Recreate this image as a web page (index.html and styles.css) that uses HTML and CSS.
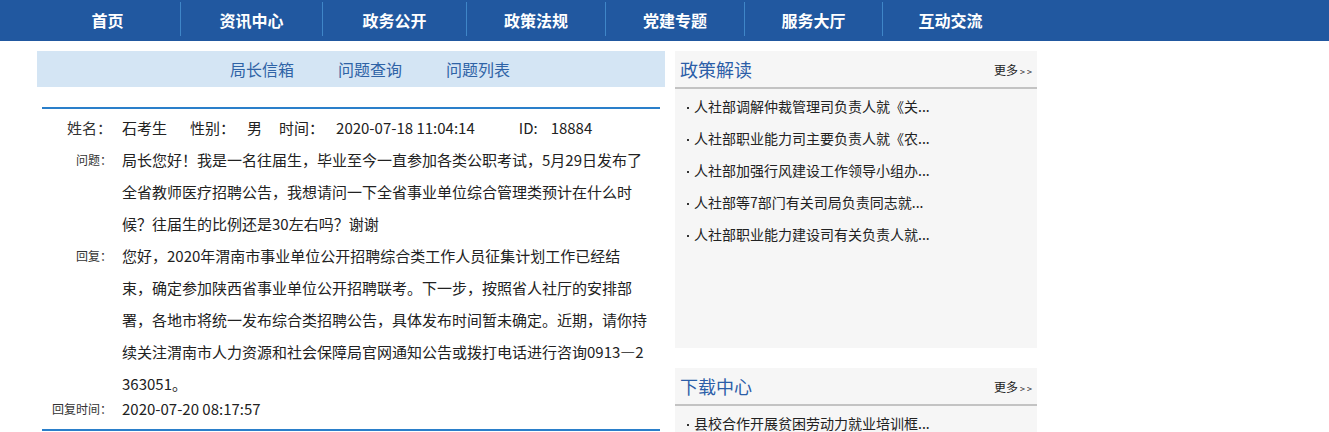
FILE: index.html
```
<!DOCTYPE html>
<html lang="zh-CN">
  <head>
    <meta charset="UTF-8" />
    <title>局长信箱</title>
    <link rel="stylesheet" href="styles.css">
  </head>
  <body>
    <div class="nav">
      <ul>
        <li>首页</li>
        <li>资讯中心</li>
        <li>政务公开</li>
        <li>政策法规</li>
        <li>党建专题</li>
        <li>服务大厅</li>
        <li>互动交流</li>
      </ul>
    </div>

    <div class="main">
      <div class="left">
        <div class="sub-nav">
          <a>局长信箱</a>
          <a>问题查询</a>
          <a>问题列表</a>
        </div>

        <div class="letter">
          <div class="row info">
            <div class="label big">姓名：</div>
            <div class="info-line">
              <span class="v-name">石考生</span>
              <span class="k">性别：</span>
              <span class="v-sex">男</span>
              <span class="k">时间：</span>
              <span class="v-time">2020-07-18 11:04:14</span>
              <span class="k-id">ID:</span>
              <span>18884</span>
            </div>
          </div>
          <div class="row">
            <div class="label">问题：</div>
            <div class="text">局长您好！我是一名往届生，毕业至今一直参加各类公职考试，5月29日发布了全省教师医疗招聘公告，我想请问一下全省事业单位综合管理类预计在什么时候？往届生的比例还是30左右吗？谢谢</div>
          </div>
          <div class="row">
            <div class="label">回复：</div>
            <div class="text">您好，2020年渭南市事业单位公开招聘综合类工作人员征集计划工作已经结束，确定参加陕西省事业单位公开招聘联考。下一步，按照省人社厅的安排部署，各地市将统一发布综合类招聘公告，具体发布时间暂未确定。近期，请你持续关注渭南市人力资源和社会保障局官网通知公告或拨打电话进行咨询0913—2363051。</div>
          </div>
          <div class="row reply-time">
            <div class="label">回复时间：</div>
            <div class="text">2020-07-20 08:17:57</div>
          </div>
        </div>
      </div>

      <div class="right">
        <div class="box box-tall">
          <div class="box-head">
            <span class="box-title">政策解读</span>
            <span class="more">更多<span class="arr">&gt; &gt;</span></span>
          </div>
          <ul class="list">
            <li>人社部调解仲裁管理司负责人就《关...</li>
            <li>人社部职业能力司主要负责人就《农...</li>
            <li>人社部加强行风建设工作领导小组办...</li>
            <li>人社部等7部门有关司局负责同志就...</li>
            <li>人社部职业能力建设司有关负责人就...</li>
          </ul>
        </div>
        <div class="box">
          <div class="box-head">
            <span class="box-title">下载中心</span>
            <span class="more">更多<span class="arr">&gt; &gt;</span></span>
          </div>
          <ul class="list">
            <li>县校合作开展贫困劳动力就业培训框...</li>
          </ul>
        </div>
      </div>
    </div>
  </body>
</html>
```

FILE: styles.css
```
body {
  margin: 0;
  font-family: "Noto Sans CJK SC", "Liberation Sans", sans-serif;
  color: #222;
  background: #fff;
}

ul {
  margin: 0;
  padding: 0;
  list-style: none;
}

.nav {
  height: 41px;
  background-color: #2158a0;
}
.nav ul {
  display: grid;
  grid-template-columns: 145px 142px 144px 139px 139px 138px 136px;
  margin-left: 35px;
  padding-top: 2px;
}
.nav li {
  height: 34px;
  line-height: 36px;
  text-align: center;
  color: #fff;
  font-size: 16px;
  font-weight: bold;
}
.nav li + li {
  border-left: 1px solid #3f86c8;
}

.main {
  display: flex;
  gap: 10px;
  width: 1000px;
  margin: 10px 0 0 37px;
}
.left {
  width: 628px;
}
.right {
  width: 362px;
}

.sub-nav {
  display: flex;
  gap: 44px;
  height: 36px;
  line-height: 36px;
  padding-left: 193px;
  background-color: #d4e5f4;
  font-size: 16px;
}
.sub-nav a {
  color: #2f63a6;
}

.letter {
  margin: 20px 5px 0;
  padding: 3px 0 11px;
  border-top: 2px solid #2a7fca;
  border-bottom: 2px solid #2a7fca;
  font-size: 15px;
}
.row {
  display: grid;
  grid-template-columns: 70px 526px;
  column-gap: 10px;
  line-height: 32px;
}
.text {
  word-break: break-all;
}
.label {
  text-align: right;
  font-size: 12px;
  color: #333;
}
.label.big {
  font-size: 15px;
}
.info-line {
  display: flex;
}
.info-line .k {
  margin-right: 12px;
}
.v-name {
  margin-right: 23px;
}
.v-sex {
  margin-right: 17px;
}
.v-time {
  margin-right: 44px;
}
.k-id {
  margin-right: 13px;
}
.reply-time {
  line-height: 18px;
}

.box {
  background-color: #f6f6f6;
}
.box-tall {
  height: 297px;
  margin-bottom: 20px;
}
.box-head {
  display: flex;
  justify-content: space-between;
  align-items: center;
  height: 36px;
  padding: 0 5px;
  border-bottom: 2px solid #c3c3c3;
}
.box-title {
  font-size: 18px;
  color: #2c5ea8;
}
.more {
  font-size: 12px;
  color: #222;
}
.arr {
  font-size: 9px;
  margin-left: 2px;
}
.list {
  padding: 1px 0 0 12px;
}
.list li {
  line-height: 32px;
  font-size: 14px;
}
.list li::before {
  content: "";
  display: inline-block;
  width: 2px;
  height: 2px;
  margin-right: 5px;
  vertical-align: middle;
  background-color: #333;
}
```
